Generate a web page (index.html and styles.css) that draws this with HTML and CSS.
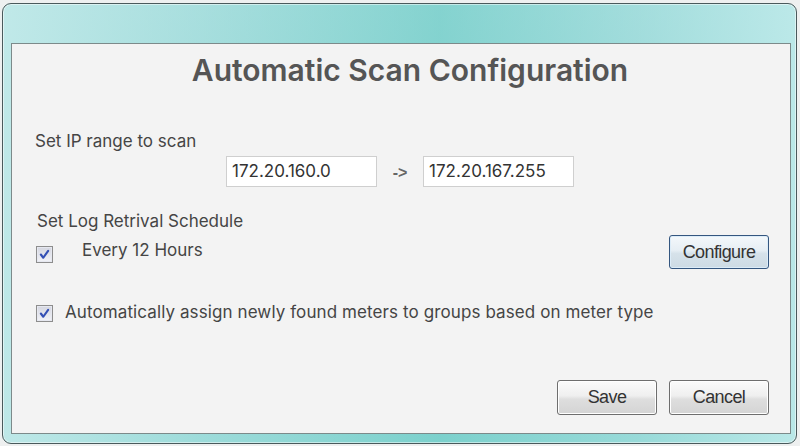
FILE: index.html
```html
<!DOCTYPE html>
<html>
<head>
<meta charset="utf-8">
<link rel="stylesheet" href="styles.css">
</head>
<body>
<div class="window">
  <div class="panel">
    <h1 class="title">Automatic Scan Configuration</h1>
    <div class="label ip-label">Set IP range to scan</div>
    <div class="ip-row">
      <div class="field">172.20.160.0</div>
      <span class="arrow">-&gt;</span>
      <div class="field">172.20.167.255</div>
    </div>
    <div class="label log-label">Set Log Retrival Schedule</div>
    <div class="sched-row">
      <span class="check"><svg width="16" height="16" viewBox="0 0 16 16"><path d="M3.5 8 L6.5 12 L12.5 3.5" fill="none" stroke="#3450b5" stroke-width="2.6" stroke-linecap="round" stroke-linejoin="round"/></svg></span>
      <span class="sched-text">Every 12 Hours</span>
      <button class="btn btn-focus">Configure</button>
    </div>
    <div class="auto-row">
      <span class="check"><svg width="16" height="16" viewBox="0 0 16 16"><path d="M3.5 8 L6.5 12 L12.5 3.5" fill="none" stroke="#3450b5" stroke-width="2.6" stroke-linecap="round" stroke-linejoin="round"/></svg></span>
      <span class="auto-text">Automatically assign newly found meters to groups based on meter type</span>
    </div>
    <div class="actions">
      <button class="btn">Save</button>
      <button class="btn">Cancel</button>
    </div>
  </div>
</div>
</body>
</html>
```
FILE: styles.css
```css
html, body {
  margin: 0;
  padding: 0;
  background: #eef0f0;
}
body {
  width: 800px;
  height: 446px;
  overflow: hidden;
  font-family: Inter, "Noto Sans", sans-serif;
}
.window {
  box-sizing: border-box;
  margin: 3px 3px 0 2px;
  width: 795px;
  height: 441px;
  border: 1px solid #4a5a5c;
  border-radius: 9px;
  background:
    linear-gradient(90deg, rgba(195,234,234,0.9) 0%, rgba(170,225,225,0.5) 25%, rgba(110,205,200,0.6) 55%, rgba(160,222,222,0.5) 80%, rgba(190,234,234,0.9) 100%),
    linear-gradient(180deg, #a6dcdb 0%, #8fd4d1 60%, #90d6d3 100%);
  padding: 39px 5px 9px 8px;
  box-shadow: inset 0 0 0 1px rgba(255,255,255,0.5);
}
.panel {
  box-sizing: border-box;
  height: 100%;
  border: 1px solid #7c8a8a;
  background: #f3f3f3;
  display: flex;
  flex-direction: column;
  color: #454545;
}
.title {
  margin: 8px 0 0 18px;
  text-align: center;
  font-size: 30px;
  font-weight: 600;
  line-height: 36px;
  color: #555;
}
.label {
  font-size: 17px;
  line-height: 20px;
}
.ip-label {
  margin: 43px 0 0 23px;
}
.ip-row {
  display: flex;
  align-items: center;
  margin: 5px 0 0 214px;
  gap: 0;
}
.field {
  box-sizing: border-box;
  width: 151px;
  height: 31px;
  background: #fff;
  border: 1px solid #cfcfcf;
  font-size: 17px;
  line-height: 29px;
  padding-left: 5px;
  color: #333;
}
.arrow {
  width: 46px;
  text-align: center;
  font-family: "Liberation Sans", Arial, sans-serif;
  font-weight: bold;
  font-size: 16px;
  color: #666;
  padding-top: 2px;
}
.log-label {
  margin: 24px 0 0 25px;
}
.sched-row {
  display: flex;
  align-items: center;
  margin: 4px 21px 0 24px;
  height: 34px;
}
.check {
  box-sizing: border-box;
  width: 17px;
  height: 17px;
  border: 1px solid #8d8d8d;
  background: linear-gradient(180deg, #d4d6e0 0%, #f2f3f8 100%);
  box-shadow: inset 0 0 0 1px #e6e8f0;
  display: flex;
  align-items: center;
  justify-content: center;
  flex: none;
}
.check svg {
  width: 13px;
  height: 13px;
}
.sched-row .check {
  margin-top: 5px;
}
.sched-text {
  font-size: 17px;
  margin-left: 29px;
  margin-top: -4px;
}
.btn {
  box-sizing: border-box;
  width: 100px;
  height: 35px;
  border: 1px solid #6e6e6e;
  border-radius: 3px;
  background: linear-gradient(180deg, #fbfbfb 0%, #efefef 45%, #dedede 55%, #d4d4d4 100%);
  font-family: "Liberation Sans", Arial, sans-serif;
  font-size: 18px;
  letter-spacing: -0.6px;
  color: #333;
  padding: 0;
  box-shadow: inset 0 0 0 1px #fff;
}
.sched-row .btn {
  margin-left: auto;
  height: 34px;
}
.btn-focus {
  border-color: #34567f;
  background: linear-gradient(180deg, #f4f8fb 0%, #e6eef4 45%, #d6e2ea 55%, #cddbe4 100%);
  box-shadow: inset 0 0 0 1px #dcecf8;
}
.auto-row {
  display: flex;
  align-items: center;
  margin: 36px 0 0 24px;
}
.auto-text {
  font-size: 17px;
  letter-spacing: 0.1px;
  margin-left: 12px;
  margin-top: -4px;
}
.actions {
  margin-top: auto;
  margin-bottom: 18px;
  margin-right: 21px;
  display: flex;
  justify-content: flex-end;
  gap: 12px;
}
```
